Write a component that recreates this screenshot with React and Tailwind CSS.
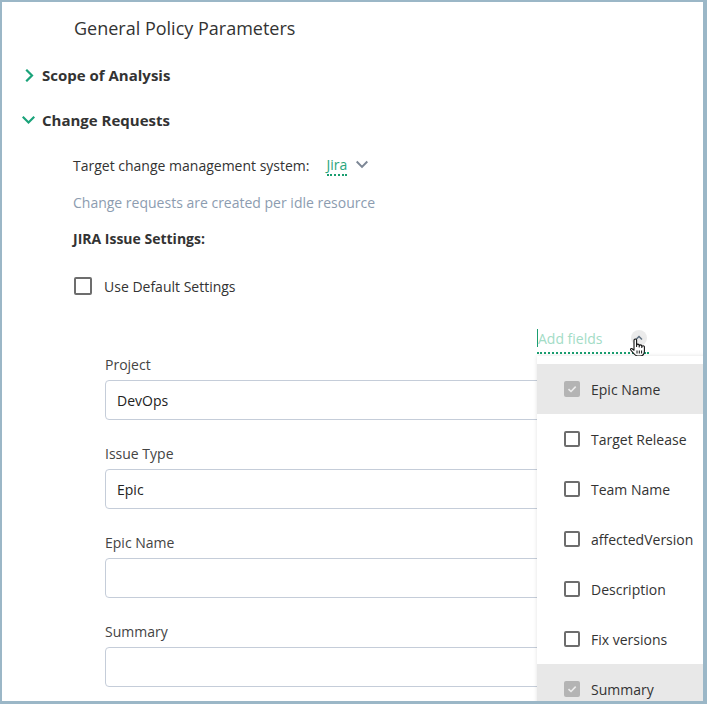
import React from "react";

const font = { fontFamily: '"Open Sans", "Noto Sans", sans-serif' };

function Chevron({ dir = "right", className = "" }) {
  const d = dir === "right" ? "M3 1.5 L8 6.5 L3 11.5" : dir === "down" ? "M1.5 3.5 L6.5 8.5 L11.5 3.5" : "M1.5 8.5 L6.5 3.5 L11.5 8.5";
  return (
    <svg width="13" height="13" viewBox="0 0 13 13" className={className}>
      <path d={d} fill="none" stroke="currentColor" strokeWidth="2.2" strokeLinecap="square" />
    </svg>
  );
}

function Box({ checked }) {
  if (checked) {
    return (
      <div className="w-4 h-4 rounded-[2px] bg-[#b4b4b4] flex items-center justify-center shrink-0">
        <svg width="12" height="12" viewBox="0 0 12 12">
          <path d="M2.5 6.2 L5 8.5 L9.7 3.6" fill="none" stroke="#ececec" strokeWidth="1.6" />
        </svg>
      </div>
    );
  }
  return <div className="w-4 h-4 rounded-[2px] border-2 border-[#6d6d6d] shrink-0" />;
}

function Field({ label, value, first }) {
  return (
    <div className={first ? "" : "mt-6"}>
      <div className="text-[14px] leading-[20px] text-[#444]">{label}</div>
      <div className="mt-[5px] h-10 w-[560px] rounded-[4px] border border-[#c5cdd9] flex items-center pl-[11px] text-[14px] text-[#222]">
        {value}
      </div>
    </div>
  );
}

const items = [
  { t: "Epic Name", c: true },
  { t: "Target Release" },
  { t: "Team Name" },
  { t: "affectedVersion" },
  { t: "Description" },
  { t: "Fix versions" },
  { t: "Summary", c: true },
];

export default function App() {
  return (
    <div
      style={font}
      className="relative w-[707px] h-[704px] overflow-hidden bg-white border-solid border-[#9bb7c7] border-l-2 border-t-2 border-r-4 border-b-[3px]"
    >
      <div className="pl-[72px] pt-[14px] text-[18px] leading-[24px] text-[#333]">General Policy Parameters</div>

      <div className="mt-[23px] pl-[22px] flex items-center h-6 gap-[5px] text-[15px] font-bold text-[#333]">
        <Chevron dir="right" className="text-[#1aa37a]" />
        <span>Scope of Analysis</span>
      </div>

      <div className="mt-[21px] pl-[20px] flex items-center h-6 gap-[7px] text-[15px] font-bold text-[#333]">
        <Chevron dir="down" className="text-[#1aa37a]" />
        <span>Change Requests</span>
      </div>

      <div className="pl-[71px]">
        <div className="mt-[23px] h-5 flex items-center text-[14px] text-[#333]">
          <span>Target change management system:</span>
          <span className="ml-[17px] text-[#2ba57c] leading-[19px] border-b-2 border-dotted border-[#1a9e70]">Jira</span>
          <Chevron dir="down" className="ml-[9px] text-[#7d8796] w-[12px] h-[12px]" />
        </div>
        <div className="mt-[18px] h-5 leading-5 text-[14px] text-[#8c9cb0]">Change requests are created per idle resource</div>
        <div className="mt-4 h-5 leading-5 text-[14px] font-bold text-[#333]">JIRA Issue Settings:</div>
        <div className="mt-[27px] h-5 flex items-center gap-3 text-[14px] text-[#333]">
          <div className="w-[18px] h-[18px] ml-[1px] rounded-[2px] border-2 border-[#6d6d6d]" />
          <span>Use Default Settings</span>
        </div>

        <div className="mt-[32px] ml-[464px] w-[112px] h-[27px] relative">
          <div className="flex items-center h-5 text-[14px] text-[#a3dcc6]">
            <span className="w-px h-[18px] bg-[#1a9e70]" />
            <span>Add fields</span>
          </div>
          <div className="absolute left-0 right-0 top-[24px] border-b-2 border-dotted border-[#1a9e70]" />
          <div className="absolute left-[94px] top-[2px] w-4 h-4 rounded-full bg-[#ebebeb] flex items-center justify-center text-[#607080]">
            <svg width="10" height="10" viewBox="0 0 10 10"><path d="M2 6.5 L5 3.5 L8 6.5" fill="none" stroke="currentColor" strokeWidth="1.5" /></svg>
          </div>
          <svg className="absolute left-[92px] top-[10px]" width="17" height="19" viewBox="0 0 17 19">
            <path
              d="M5 10V2.3a1.3 1.3 0 0 1 2.6 0V8.5V7.4a1.3 1.3 0 0 1 2.6 0V9V8.2a1.3 1.3 0 0 1 2.6 0V9.5V9a1.3 1.3 0 0 1 2.6 0v4c0 3-1.8 5-4.6 5H8.6c-1.6 0-2.6-.8-3.6-2.2L1.7 12c-.6-.9.5-2 1.4-1.3L5 12.2Z"
              fill="#fff"
              stroke="#111"
              strokeWidth="1.1"
              strokeLinejoin="round"
            />
            <path d="M8 12.5v3M10.3 12.5v3M12.6 12.5v3" stroke="#111" strokeWidth="1" />
          </svg>
        </div>

        <div className="pl-[32px] mt-0">
          <Field label="Project" value="DevOps" first />
          <Field label="Issue Type" value="Epic" />
          <Field label="Epic Name" value="" />
          <Field label="Summary" value="" />
        </div>
      </div>

      <div className="absolute left-[535px] top-[354px] w-[200px] bg-white pt-2 shadow-[0_0_4px_rgba(0,0,0,0.12)]">
        {items.map((it) => (
          <div
            key={it.t}
            className={`h-[50px] flex items-center pl-[27px] gap-[11px] text-[14px] text-[#333] ${it.c ? "bg-[#e8e8e8]" : ""}`}
          >
            <Box checked={it.c} />
            <span>{it.t}</span>
          </div>
        ))}
      </div>
    </div>
  );
}
